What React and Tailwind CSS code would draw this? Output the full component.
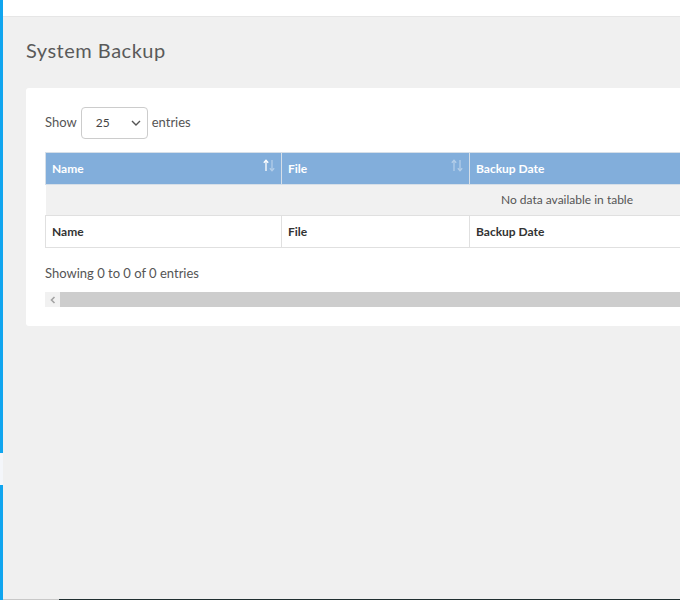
import React from "react";

function SortIcon({ upOpacity = "opacity-100", downOpacity = "opacity-40" }) {
  return (
    <svg width="12" height="13" viewBox="0 0 12 13" className="shrink-0">
      <g className={upOpacity} stroke="#ffffff" strokeWidth="1.3" fill="none">
        <path d="M3 12V1.5" />
        <path d="M0.8 3.8L3 1.3L5.2 3.8" />
      </g>
      <g className={downOpacity} stroke="#ffffff" strokeWidth="1.3" fill="none">
        <path d="M9 1V11.5" />
        <path d="M6.8 9.2L9 11.7L11.2 9.2" />
      </g>
    </svg>
  );
}

export default function App() {
  return (
    <div
      className="w-[680px] h-[600px] overflow-hidden flex bg-[#f0f0f0] text-[#555]"
      style={{ fontFamily: "Lato, 'Open Sans', sans-serif" }}
    >
      <div className="w-[3px] h-full flex flex-col shrink-0">
        <div className="h-[453px] bg-[#10a5ef]" />
        <div className="h-[32px] bg-[#f4f6fa]" />
        <div className="flex-1 bg-[#10a5ef]" />
      </div>
      <div className="flex-1 min-w-0 flex flex-col">
        <div className="h-[17px] bg-white border-b border-[#e6e6e6] shrink-0" />
        <div className="flex-1 min-h-0 pl-[23px] pt-[19px]">
          <h1 className="text-[20px] leading-[28px] tracking-[0.5px] text-[#5a5a5a] font-normal">System Backup</h1>
          <div className="mt-[24px] w-[1100px] bg-white rounded-[3px] pl-[19px] pt-[19px] pb-[19px]">
            <div className="flex items-center gap-[4px] text-[13px] text-[#555]">
              <span>Show</span>
              <div className="w-[67px] h-[32px] border border-[#ccc] rounded-[4px] flex items-center justify-between pl-[14px] pr-[6px] text-[12px] text-[#444]">
                <span>25</span>
                <svg width="10" height="6" viewBox="0 0 10 6">
                  <path d="M1 1L5 5L9 1" stroke="#555" strokeWidth="1.4" fill="none" />
                </svg>
              </div>
              <span>entries</span>
            </div>
            <table className="mt-[13px] w-[1044px] border-collapse text-[12px]">
              <thead>
                <tr className="bg-[#82aedb] text-white">
                  <th className="w-[236px] h-[32px] border border-[#d6dfe8] text-left font-bold pl-[6px] pr-[6px]">
                    <div className="flex items-center justify-between">
                      <span>Name</span>
                      <span className="-mt-[6px]"><SortIcon upOpacity="opacity-100" downOpacity="opacity-40" /></span>
                    </div>
                  </th>
                  <th className="w-[188px] h-[32px] border border-[#d6dfe8] text-left font-bold pl-[6px] pr-[6px]">
                    <div className="flex items-center justify-between">
                      <span>File</span>
                      <span className="-mt-[6px]"><SortIcon upOpacity="opacity-40" downOpacity="opacity-40" /></span>
                    </div>
                  </th>
                  <th className="h-[32px] border border-[#d6dfe8] text-left font-bold pl-[6px]">Backup Date</th>
                </tr>
              </thead>
              <tbody>
                <tr className="bg-[#f1f1f1]">
                  <td colSpan={3} className="h-[31px] text-center text-[#555] border-b border-[#e0e0e0]">
                    No data available in table
                  </td>
                </tr>
              </tbody>
              <tfoot>
                <tr className="bg-white text-[#333]">
                  <td className="h-[32px] border border-[#e0e0e0] font-bold pl-[6px]">Name</td>
                  <td className="h-[32px] border border-[#e0e0e0] font-bold pl-[6px]">File</td>
                  <td className="h-[32px] border border-[#e0e0e0] font-bold pl-[6px]">Backup Date</td>
                </tr>
              </tfoot>
            </table>
            <div className="mt-[15px] text-[13px] leading-[20px] text-[#555]">Showing 0 to 0 of 0 entries</div>
            <div className="mt-[9px] h-[15px] w-[1044px] flex">
              <div className="w-[15px] h-full bg-[#f1f1f1] flex items-center justify-center">
                <svg width="6" height="8" viewBox="0 0 6 8">
                  <path d="M4.5 1L1.5 4L4.5 7" stroke="#a3a3a3" strokeWidth="1.6" fill="none" />
                </svg>
              </div>
              <div className="flex-1 h-full bg-[#cdcdcd]" />
            </div>
          </div>
        </div>
        <div className="h-[1px] flex shrink-0">
          <div className="w-[56px] bg-[#c8c8c8]" />
          <div className="flex-1 bg-[#1f2e30]" />
        </div>
      </div>
    </div>
  );
}
